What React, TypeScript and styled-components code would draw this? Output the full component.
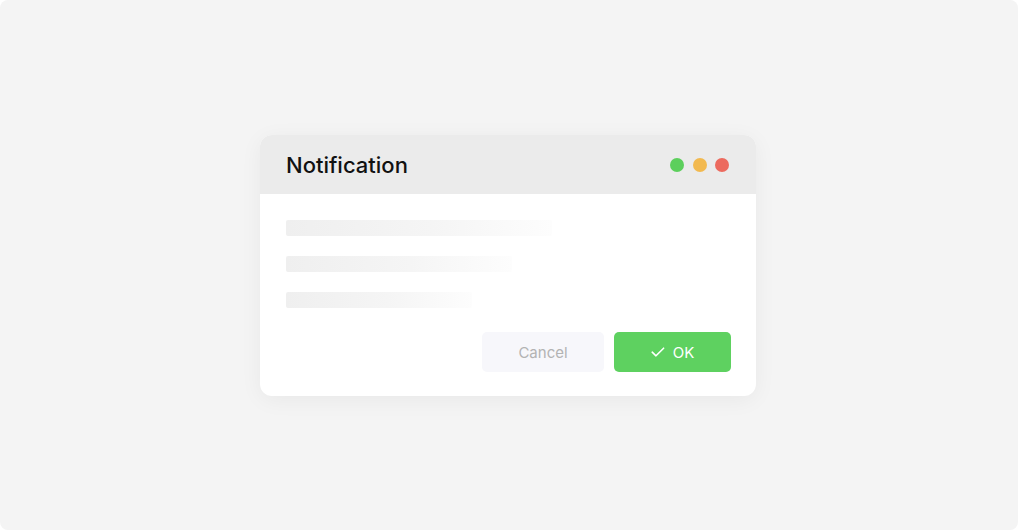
import * as React from 'react';
import styled, { createGlobalStyle } from 'styled-components';

const Global = createGlobalStyle`
  html, body { margin: 0; padding: 0; background: #ffffff; }
  body { font-family: Inter, "Noto Sans", "Liberation Sans", sans-serif; }
`

const Page = styled.div`
  width: 1018px;
  height: 530px;
  box-sizing: border-box;
  border-radius: 8px;
  background: #f4f4f4;
  display: flex;
  align-items: center;
  justify-content: center;
`

const Dialog = styled.div`
  width: 496px;
  margin-left: -2px;
  margin-top: 1px;
  border-radius: 12px;
  overflow: hidden;
  background: #ffffff;
  box-shadow: 0 4px 22px rgba(0, 0, 0, 0.05);
`

const Header = styled.div`
  height: 59px;
  padding: 0 27px 0 26px;
  background: #ebebeb;
  display: flex;
  align-items: center;
  justify-content: space-between;
`

const Title = styled.h2`
  margin: 0;
  font-size: 22px;
  font-weight: 500;
  letter-spacing: 0;
  color: #111111;
`

const Dots = styled.div`
  display: flex;
  gap: 8.5px;
`

const Dot = styled.span<{ $color: string }>`
  width: 14px;
  height: 14px;
  border-radius: 50%;
  background: ${p => p.$color};
`

const Body = styled.div`
  padding: 26px 25px 24px 26px;
  display: flex;
  flex-direction: column;
`

const Lines = styled.div`
  display: flex;
  flex-direction: column;
  gap: 20px;
`

const Line = styled.div<{ $width: number }>`
  width: ${p => p.$width}px;
  height: 16px;
  border-radius: 2px;
  background: linear-gradient(90deg, #efefef 0%, #f5f5f5 55%, #fdfdfd 100%);
`

const Actions = styled.div`
  margin-top: 24px;
  display: flex;
  justify-content: flex-end;
  gap: 10px;
`

const Button = styled.button<{ $primary?: boolean }>`
  height: 40px;
  width: ${p => (p.$primary ? 117 : 122)}px;
  border: none;
  border-radius: 5px;
  display: flex;
  align-items: center;
  justify-content: center;
  gap: 8px;
  font-family: inherit;
  font-size: 15px;
  background: ${p => (p.$primary ? '#5ed160' : '#f7f7fb')};
  color: ${p => (p.$primary ? '#ffffff' : '#b3b3b3')};
`

function Check() {
  return (
    <svg width="14" height="14" viewBox="0 0 14 14" fill="none">
      <path d="M1.2 7.2 L5 10.8 L12.6 3.2" stroke="#ffffff" strokeWidth="1.6" strokeLinecap="round" strokeLinejoin="round" />
    </svg>
  )
}

export default function App() {
  return (
    <>
      <Global />
      <Page>
        <Dialog>
          <Header>
            <Title>Notification</Title>
            <Dots>
              <Dot $color="#5ccf5c" />
              <Dot $color="#f2b94f" />
              <Dot $color="#ec6a5e" />
            </Dots>
          </Header>
          <Body>
            <Lines>
              <Line $width={266} />
              <Line $width={226} />
              <Line $width={186} />
            </Lines>
            <Actions>
              <Button>Cancel</Button>
              <Button $primary>
                <Check />
                OK
              </Button>
            </Actions>
          </Body>
        </Dialog>
      </Page>
    </>
  )
}
